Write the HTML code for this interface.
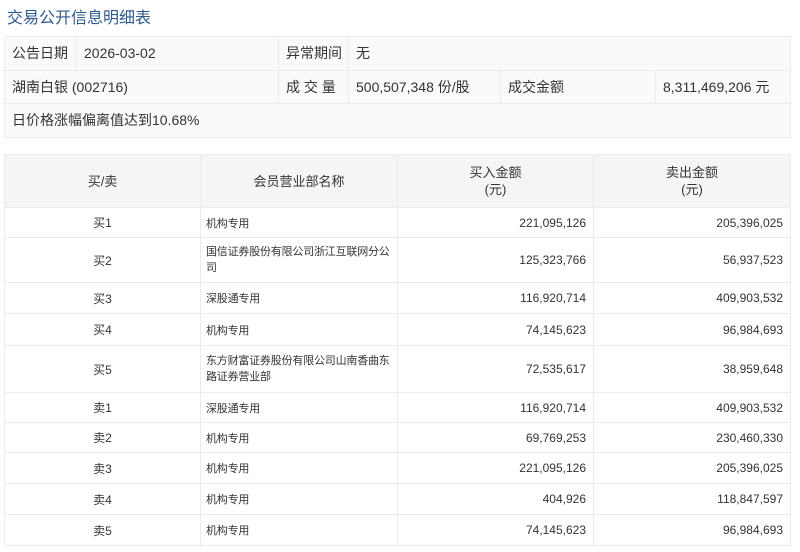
<!DOCTYPE html>
<html><head><meta charset="utf-8"><style>
*{margin:0;padding:0;box-sizing:border-box}
body{width:800px;height:552px;background:#fff;font-family:"Liberation Sans","Noto Sans CJK SC",sans-serif;color:#333;position:relative;overflow:hidden}
.title{position:absolute;left:7px;top:4px;font-size:16px;color:#2f5a8f}
table{position:absolute;border-collapse:collapse;table-layout:fixed}
td{border:1px solid #ebebeb;font-size:13px;padding:0 7px;white-space:nowrap}
#t1{left:4px;top:36px;width:786px;background:#fafafa}
#t1 td{height:33.5px;font-size:14px}
#t2{left:4px;top:154px;width:786px}
#t2 td{font-size:12px;color:#333}
#t2 td.n{font-size:11px;padding:0 5px;letter-spacing:-0.2px;overflow:hidden}
#t2 .h td{background:#f5f5f5;height:53px;text-align:center;font-size:13px;line-height:17px}
.c{text-align:center}.r{text-align:right}
</style></head><body>
<div class="title">交易公开信息明细表</div>
<table id="t1">
<colgroup><col style="width:72px"><col style="width:202px"><col style="width:70px"><col style="width:152px"><col style="width:155px"><col style="width:135px"></colgroup>
<tr><td>公告日期</td><td>2026-03-02</td><td>异常期间</td><td colspan="3">无</td></tr>
<tr><td colspan="2">湖南白银 (002716)</td><td>成 交 量</td><td>500,507,348 份/股</td><td>成交金额</td><td>8,311,469,206 元</td></tr>
<tr><td colspan="6">日价格涨幅偏离值达到10.68%</td></tr>
</table>
<table id="t2">
<colgroup><col style="width:196px"><col style="width:197px"><col style="width:196px"><col style="width:197px"></colgroup>
<tr class="h"><td>买/卖</td><td>会员营业部名称</td><td>买入金额<br>(元)</td><td>卖出金额<br>(元)</td></tr>
<tr style="height:30px"><td class="c">买1</td><td class="n">机构专用</td><td class="r">221,095,126</td><td class="r">205,396,025</td></tr>
<tr style="height:45px"><td class="c">买2</td><td class="n" style="line-height:16px">国信证券股份有限公司浙江互联网分公<br>司</td><td class="r">125,323,766</td><td class="r">56,937,523</td></tr>
<tr style="height:31px"><td class="c">买3</td><td class="n">深股通专用</td><td class="r">116,920,714</td><td class="r">409,903,532</td></tr>
<tr style="height:32px"><td class="c">买4</td><td class="n">机构专用</td><td class="r">74,145,623</td><td class="r">96,984,693</td></tr>
<tr style="height:47px"><td class="c">买5</td><td class="n" style="line-height:16px">东方财富证券股份有限公司山南香曲东<br>路证券营业部</td><td class="r">72,535,617</td><td class="r">38,959,648</td></tr>
<tr style="height:30px"><td class="c">卖1</td><td class="n">深股通专用</td><td class="r">116,920,714</td><td class="r">409,903,532</td></tr>
<tr style="height:30px"><td class="c">卖2</td><td class="n">机构专用</td><td class="r">69,769,253</td><td class="r">230,460,330</td></tr>
<tr style="height:31px"><td class="c">卖3</td><td class="n">机构专用</td><td class="r">221,095,126</td><td class="r">205,396,025</td></tr>
<tr style="height:31px"><td class="c">卖4</td><td class="n">机构专用</td><td class="r">404,926</td><td class="r">118,847,597</td></tr>
<tr style="height:31px"><td class="c">卖5</td><td class="n">机构专用</td><td class="r">74,145,623</td><td class="r">96,984,693</td></tr>
</table>
</body></html>
